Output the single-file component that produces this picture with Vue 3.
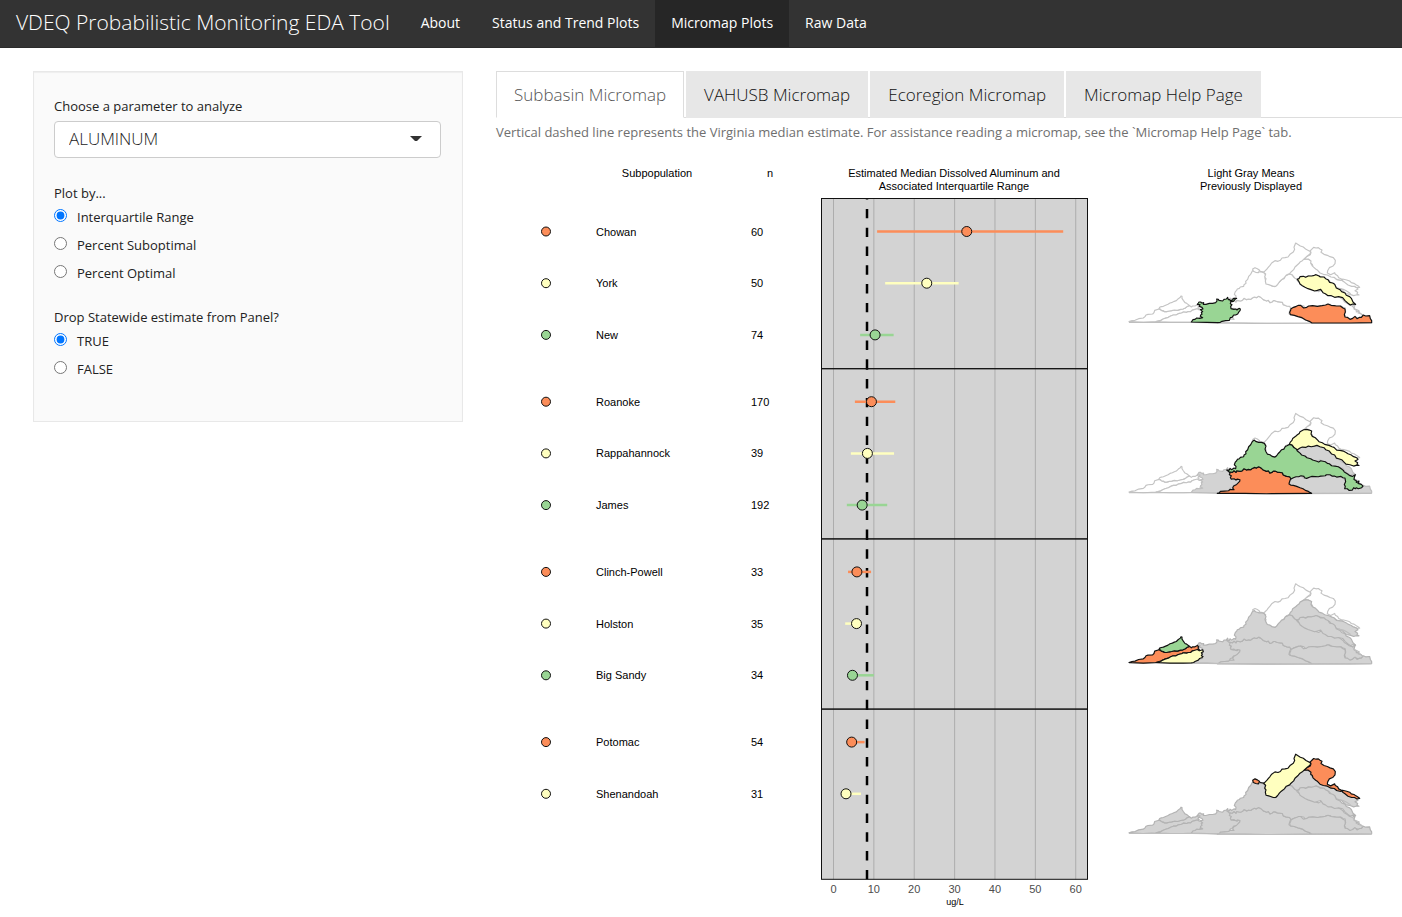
<script setup>
import { ref } from 'vue'

const pages = ['About', 'Status and Trend Plots', 'Micromap Plots', 'Raw Data']
const page = ref('Micromap Plots')
const tabs = ['Subbasin Micromap', 'VAHUSB Micromap', 'Ecoregion Micromap', 'Micromap Help Page']
const tab = ref('Subbasin Micromap')
const parameter = ref('ALUMINUM')
const plotBy = ref('Interquartile Range')
const plotOptions = ['Interquartile Range', 'Percent Suboptimal', 'Percent Optimal']
const dropState = ref('TRUE')
const dropOptions = ['TRUE', 'FALSE']

const colors = ['#fc8d59', '#ffffbf', '#99d594']
const groups = [
  [
    { name: 'Chowan', n: 60, low: 10.8, mid: 33, high: 56.9 },
    { name: 'York', n: 50, low: 12.8, mid: 23.1, high: 31 },
    { name: 'New', n: 74, low: 6.6, mid: 10.3, high: 14.9 }
  ],
  [
    { name: 'Roanoke', n: 170, low: 5.3, mid: 9.4, high: 15.3 },
    { name: 'Rappahannock', n: 39, low: 4.3, mid: 8.4, high: 15 },
    { name: 'James', n: 192, low: 3.3, mid: 7.1, high: 13.3 }
  ],
  [
    { name: 'Clinch-Powell', n: 33, low: 3.6, mid: 5.8, high: 9.3 },
    { name: 'Holston', n: 35, low: 2.9, mid: 5.7, high: 6.5 },
    { name: 'Big Sandy', n: 34, low: 4.1, mid: 4.7, high: 10 }
  ],
  [
    { name: 'Potomac', n: 54, low: 4.1, mid: 4.5, high: 7.7 },
    { name: 'Shenandoah', n: 31, low: 2.5, mid: 3.1, high: 6.8 }
  ]
]
const median = 8.3
const ticks = [0, 10, 20, 30, 40, 50, 60]
const panelLeft = 325.5
const panelRight = 591.5
const panelTop = 38.5
const panelHeight = 170.2
const sx = (v) => 337.5 + v * 4.037
const top = (g) => panelTop + g * panelHeight
const rowY = (g, r) => top(g) + 33 + r * 51.7

// Outlines in map units, three to one plot unit.
const basins = {
  'Big Sandy': 'M117 221L119 217L124 215L130 214L137 211L144 208L150 204L157 202L163 199L169 197L175 191L181 187L183 183L186 184L186 190L190 196L195 203L200 205L205 209L208 213L202 214L196 219L189 222L182 223L172 226L163 225L155 227L148 228L140 230L134 230L130 227L124 226L122 223Z',
  'Clinch-Powell': 'M27 260L36 257L45 256L56 251L70 249L75 245L78 240L84 238L98 237L102 233L104 226L117 222L122 224L126 227L134 230L140 230L148 228L155 227L163 225L172 226L182 223L189 222L196 219L202 214L208 211L214 216L218 213L225 213L232 209L236 213L234 217L238 221L228 225L222 224L216 226L212 230L205 230L200 232L190 231L185 234L175 236L168 240L160 240L152 243L145 247L135 250L128 253L122 256L108 260L70 262Z',
  Holston: 'M108 260L122 257L128 253L135 250L145 247L152 243L160 240L168 240L175 236L185 234L190 231L200 232L205 230L212 230L216 226L222 224L232 221L238 225L248 222L250 228L244 231L247 235L244 240L249 242L245 246L239 248L235 253L225 257L221 260L214 261L190 262L150 262Z',
  New: 'M232 208L235 204L237 201L242 201L245 204L251 203L250 208L258 208L268 205L278 205L287 203L291 198L290 192L295 193L297 196L308 198L312 193L319 192L323 187L325 194L330 194L331 198L338 194L340 191L350 190L345 194L340 199L333 199L331 206L336 209L332 214L333 221L342 223L347 222L351 225L357 220L361 222L360 227L357 230L353 237L347 240L341 240L336 247L331 248L328 256L317 257L306 259L301 262L292 263L260 262L214 261L219 254L225 253L230 249L239 250L248 248L241 244L242 240L246 238L244 232L248 230L241 224L249 222L246 217L238 214L240 209Z',
  Roanoke: 'M292 264L298 262L301 258L313 257L326 256L330 252L342 253L338 248L341 242L350 237L359 228L360 223L352 221L348 224L342 220L334 221L331 217L334 211L328 208L330 203L327 199L337 201L342 196L348 201L350 196L361 198L367 196L372 190L380 194L385 192L392 193L397 189L403 186L409 188L416 184L422 187L426 189L430 194L435 196L440 198L445 196L450 203L456 201L460 197L465 197L472 200L480 201L487 202L490 209L500 213L509 214L513 218L510 225L508 231L507 236L512 239L520 240L530 243L540 247L549 250L556 255L565 258L570 261L575 264L440 265L375 264Z',
  James: 'M327 199L320 194L328 194L330 189L335 193L342 188L347 190L348 183L343 178L346 170L350 166L352 162L358 160L361 156L371 154L372 149L378 145L377 139L383 133L386 124L392 118L397 108L403 104L407 108L416 111L425 111L433 114L438 122L435 131L438 139L442 146L450 148L456 153L465 155L470 151L474 145L480 139L485 133L492 131L496 123L501 121L508 117L516 119L521 126L528 130L532 137L541 144L545 149L555 152L561 157L572 160L578 164L588 167L596 170L602 166L616 169L622 174L628 175L635 181L645 182L655 184L665 191L670 195L673 200L683 206L688 210L697 213L706 208L703 216L702 222L709 226L709 231L717 227L714 234L724 237L729 242L725 247L715 250L709 247L706 250L701 247L697 254L687 255L682 250L674 250L676 243L673 237L677 229L675 218L669 217L663 213L650 215L643 212L636 212L630 208L619 208L616 211L602 212L595 214L576 213L570 215L560 219L553 217L552 213L543 211L536 214L528 214L520 217L513 221L509 214L500 213L490 209L487 202L472 200L465 197L460 197L456 201L450 203L445 196L440 198L430 194L422 187L416 184L409 188L403 186L397 189L392 193L385 192L380 194L372 190L367 196L361 198L350 196L348 201L342 196L337 201Z',
  Rappahannock: 'M508 117L511 110L516 105L518 99L528 92L532 88L538 84L540 79L551 73L560 72L568 74L575 77L573 86L577 93L586 97L593 104L597 109L607 112L614 117L627 120L636 124L642 126L650 134L660 135L670 137L678 141L684 145L694 149L699 153L710 157L714 162L705 167L713 172L711 177L717 180L708 180L701 182L690 178L678 176L672 170L665 163L656 160L649 158L644 149L635 146L628 137L617 133L612 127L600 124L591 120L583 122L574 124L565 122L557 126L547 125L540 128L532 133L525 130L516 119Z',
  York: 'M532 133L537 131L540 125L550 124L557 127L565 123L575 123L583 121L588 119L597 123L601 126L612 126L617 131L624 134L629 142L638 144L644 148L649 159L660 164L665 170L675 174L679 181L689 185L694 190L699 201L707 208L698 207L691 210L683 204L675 197L668 188L656 185L644 187L634 182L624 182L616 176L609 173L602 163L592 166L584 168L573 164L564 161L555 157L547 152L540 147L537 140Z',
  Chowan: 'M513 221L521 217L529 214L536 211L542 211L551 219L560 217L566 213L578 212L592 214L606 212L617 210L624 207L633 211L642 212L650 213L661 213L669 219L675 222L676 231L673 239L675 246L682 247L690 253L698 250L705 244L711 251L719 247L724 247L730 240L737 243L749 242L751 251L755 257L755 263L690 264L576 264L568 259L557 255L546 248L534 245L523 241L511 239L509 232L512 226Z',
  Potomac: 'M553 72L559 65L571 59L573 53L570 48L575 43L581 37L588 39L595 38L600 42L606 45L603 52L612 58L622 61L630 65L640 68L646 76L645 86L638 94L628 98L623 107L622 114L632 119L644 113L646 118L653 122L656 128L666 133L663 136L650 133L643 127L633 126L622 120L610 118L600 114L593 106L587 102L579 95L577 88L572 84L573 78L565 72ZM668 132L680 135L689 138L694 143L702 145L708 149L716 154L719 157L710 158L704 154L695 154L684 150L674 142L668 138ZM398 102L405 98L412 101L419 106L415 113L407 112L400 109ZM420 109L432 111',
  Shenandoah: 'M527 24L533 28L541 33L550 36L558 43L572 50L570 57L562 63L553 71L547 77L540 81L535 87L525 96L521 104L513 111L509 116L499 120L493 128L484 135L478 141L473 148L467 154L460 154L452 151L446 149L438 147L436 138L438 131L434 126L437 117L431 112L436 107L441 102L444 98L450 91L455 84L465 77L474 79L481 76L486 69L495 68L504 66L510 58L520 51L524 43L522 37Z'
}
const order = ['Clinch-Powell', 'Big Sandy', 'Holston', 'New', 'Roanoke', 'James', 'Rappahannock', 'York', 'Chowan', 'Potomac', 'Shenandoah']
const groupOf = (name) => groups.findIndex((g) => g.some((d) => d.name === name))
const muted = (g) => [
  ...order.filter((n) => groupOf(n) > g).map((n) => ({ n, fill: '#fff', stroke: '#c4c4c4' })),
  ...order.filter((n) => groupOf(n) < g).map((n) => ({ n, fill: '#d3d3d3', stroke: g > 1 ? '#b3b3b3' : '#bebebe' }))
]
</script>

<template>
  <div class="page">
    <header class="navbar">
      <a class="brand" href="#">VDEQ Probabilistic Monitoring EDA Tool</a>
      <nav class="links">
        <a v-for="p in pages" :key="p" href="#" :class="{ active: p === page }" @click.prevent="page = p">{{ p }}</a>
      </nav>
    </header>

    <div class="content">
      <form class="well" @submit.prevent>
        <div class="field">
          <label for="parameter">Choose a parameter to analyze</label>
          <div class="select">
            <select id="parameter" v-model="parameter">
              <option>ALUMINUM</option>
            </select>
            <svg class="caret" viewBox="0 0 12 6" aria-hidden="true"><path d="M0 0H12L7 5H5Z" /></svg>
          </div>
        </div>
        <fieldset>
          <legend>Plot by...</legend>
          <label v-for="o in plotOptions" :key="o" class="radio">
            <input v-model="plotBy" type="radio" name="plot" :value="o" />{{ o }}
          </label>
        </fieldset>
        <fieldset>
          <legend>Drop Statewide estimate from Panel?</legend>
          <label v-for="o in dropOptions" :key="o" class="radio">
            <input v-model="dropState" type="radio" name="drop" :value="o" />{{ o }}
          </label>
        </fieldset>
      </form>

      <main>
        <div class="tabs" role="tablist">
          <button
            v-for="t in tabs"
            :key="t"
            type="button"
            role="tab"
            :aria-selected="t === tab"
            :class="{ active: t === tab }"
            @click="tab = t"
          >{{ t }}</button>
        </div>
        <p class="help">Vertical dashed line represents the Virginia median estimate. For assistance reading a micromap, see the `Micromap Help Page` tab.</p>

        <svg class="plot" viewBox="0 0 906 757" role="img" aria-label="Subbasin micromap">
          <g text-anchor="middle">
            <text x="161" y="17">Subpopulation</text>
            <text x="274" y="17">n</text>
            <text x="458" y="17">Estimated Median Dissolved Aluminum and</text>
            <text x="458" y="30">Associated Interquartile Range</text>
            <text x="755" y="17">Light Gray Means</text>
            <text x="755" y="30">Previously Displayed</text>
          </g>

          <rect class="panel" :x="panelLeft" :y="panelTop" :width="panelRight - panelLeft" :height="panelHeight * 4" />
          <line v-for="t in ticks" :key="t" class="grid" :x1="sx(t)" :x2="sx(t)" :y1="panelTop" :y2="top(4)" />

          <g v-for="(rows, g) in groups" :key="g">
            <line class="median" :x1="sx(median)" :x2="sx(median)" :y1="top(g + 1)" :y2="top(g)" />
            <rect class="frame" :x="panelLeft" :y="top(g)" :width="panelRight - panelLeft" :height="panelHeight" />
            <g v-for="(d, r) in rows" :key="d.name">
              <circle class="dot" cx="50" :cy="rowY(g, r)" r="4.5" :fill="colors[r]" />
              <text x="100" :y="rowY(g, r) + 4">{{ d.name }}</text>
              <text x="255" :y="rowY(g, r) + 4">{{ d.n }}</text>
              <line class="range" :x1="sx(d.low)" :x2="sx(d.high)" :y1="rowY(g, r)" :y2="rowY(g, r)" :stroke="colors[r]" />
              <circle class="dot" :cx="sx(d.mid)" :cy="rowY(g, r)" r="5" :fill="colors[r]" />
            </g>
            <g :transform="`translate(624 ${75 + g * 170.4}) scale(0.33333)`">
              <path v-for="s in muted(g)" :key="s.n" class="basin" :d="basins[s.n]" :fill="s.fill" :stroke="s.stroke" />
              <path class="coast" d="M697 213L705 222L714 226L719 233L728 241M656 160L670 163L680 168L692 176M27 262L214 262L400 265L755 264" />
              <path v-for="(d, r) in rows" :key="d.name" class="basin" :d="basins[d.name]" :fill="colors[r]" stroke="#111" />
            </g>
          </g>

          <g class="axis" text-anchor="middle">
            <text v-for="t in ticks" :key="t" :x="sx(t)" y="733">{{ t }}</text>
          </g>
          <text class="unit" x="459" y="745" text-anchor="middle">ug/L</text>
        </svg>
      </main>
    </div>
  </div>
</template>

<style>
body {
  margin: 0;
  background: #fff;
}
</style>

<style scoped>
.page {
  font-family: 'Open Sans', 'Noto Sans', sans-serif;
  color: #222;
}
.navbar {
  display: flex;
  align-items: stretch;
  min-height: 47px;
  background: #333;
  border-bottom: 1px solid #2b2b2b;
}
.navbar a {
  color: #fff;
  text-decoration: none;
}
.brand {
  padding: 0 15px 0 16px;
  font-size: 21px;
  font-weight: 300;
  line-height: 44px;
}
.links {
  display: flex;
}
.links a {
  padding: 0 16px;
  font-size: 14px;
  line-height: 46px;
}
.links a.active {
  background: #262626;
}
.content {
  display: grid;
  grid-template-columns: minmax(0, 430fr) minmax(0, 906fr);
  gap: 33px;
  align-items: start;
  padding: 23px 0 0 33px;
}
.well {
  box-sizing: border-box;
  padding: 24px 21px 18px 20px;
  border: 1px solid #e8e8e8;
  background: #fafafa;
  box-shadow: inset 0 1px 1px rgba(0, 0, 0, 0.05);
  font-size: 13px;
}
.field {
  margin-bottom: 25px;
}
.field > label {
  display: block;
  margin-bottom: 5px;
  line-height: 20px;
}
.select {
  position: relative;
}
.select select {
  appearance: none;
  display: block;
  width: 100%;
  height: 37px;
  padding: 0 36px 2px 14px;
  border: 1px solid #ccc;
  border-radius: 4px;
  background: #fff;
  color: #222;
  font: 300 17px 'Open Sans', sans-serif;
}
.caret {
  position: absolute;
  top: 15px;
  right: 19px;
  width: 12px;
  height: 6px;
  fill: #333;
  pointer-events: none;
}
fieldset {
  min-width: 0;
  margin: 0 0 16px;
  padding: 0;
  border: 0;
}
legend {
  padding: 0;
  line-height: 20px;
}
.radio {
  display: flex;
  align-items: center;
  margin: 4px 0 8px;
  line-height: 20px;
}
.radio input {
  width: 13px;
  height: 13px;
  margin: 0 10px 3px 0;
}
main {
  min-width: 0;
}
.tabs {
  display: flex;
  gap: 2px;
  border-bottom: 1px solid #ddd;
}
.tabs button {
  margin-bottom: -1px;
  padding: 0 17px;
  border: 1px solid #e7e7e7;
  background: #e7e7e7;
  color: #111;
  font: 300 17px/45px 'Open Sans', sans-serif;
}
.tabs button.active {
  border-color: #ddd;
  border-bottom-color: #fff;
  background: #fff;
  color: #555;
}
.help {
  margin: 4px 0 18px;
  color: #6f6f6f;
  font-size: 13px;
  line-height: 20px;
}
.plot {
  display: block;
  width: 100%;
  height: auto;
  font-family: 'Liberation Sans', Arial, sans-serif;
  font-size: 11px;
  fill: #000;
}
.panel {
  fill: #d3d3d3;
}
.grid {
  stroke: #adadad;
}
.frame {
  fill: none;
  stroke: #111;
}
.median {
  stroke: #000;
  stroke-width: 2.5;
  stroke-dasharray: 9.4;
}
.range {
  stroke-width: 2.5;
}
.dot {
  stroke: #111;
}
.basin {
  stroke-width: 3.5;
  stroke-linejoin: round;
}
.coast {
  fill: none;
  stroke: #bebebe;
  stroke-width: 3.5;
}
.axis text {
  fill: #4d4d4d;
}
.unit {
  font-size: 9px;
}
</style>
